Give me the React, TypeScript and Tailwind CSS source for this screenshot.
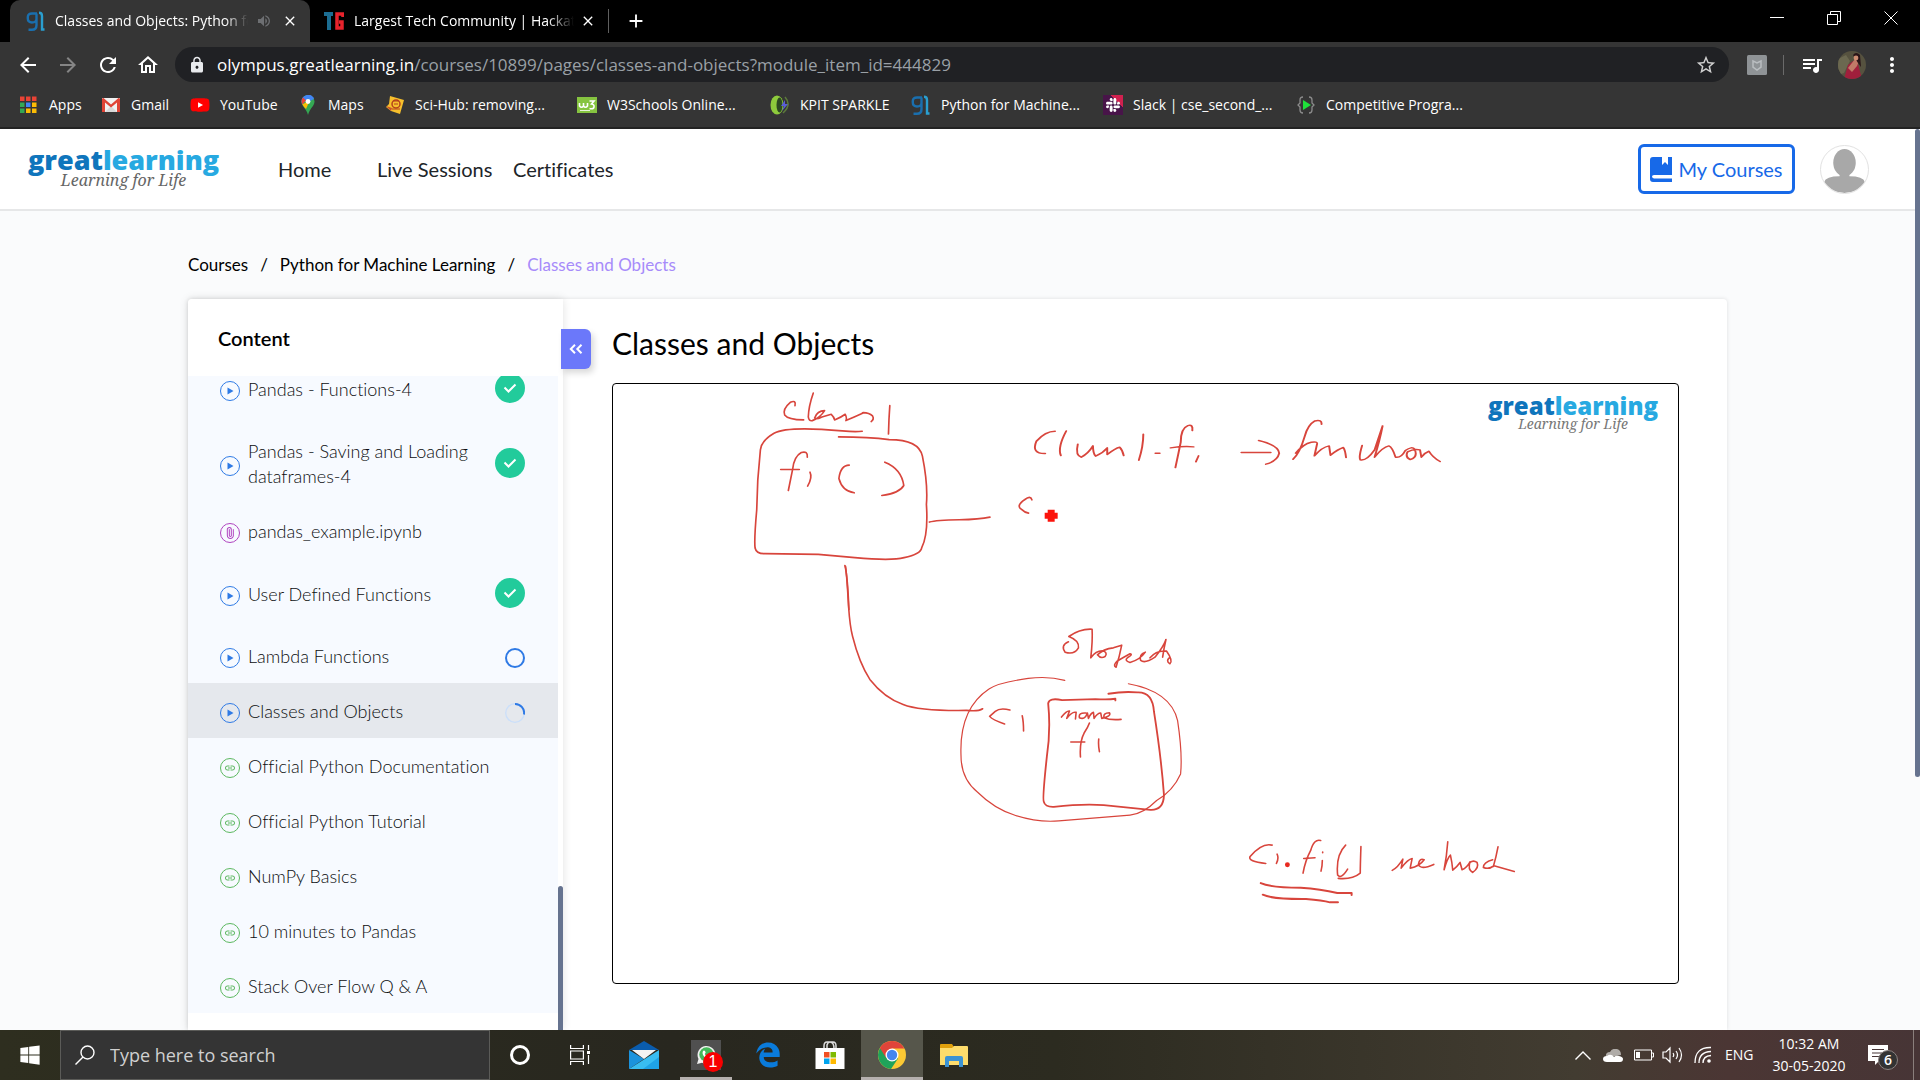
import React from "react";
import { MdArrowBack, MdArrowForward, MdRefresh, MdOutlineHome, MdLock, MdStarBorder, MdQueueMusic, MdMoreVert, MdVolumeUp, MdClose, MdAdd, MdLink } from "react-icons/md";
import { FaWindows, FaEdgeLegacy, FaSlack, FaYoutube } from "react-icons/fa6";
import { Paperclip } from "lucide-react";

function GlIcon() {
  return (
    <svg viewBox="0 0 20 20" className="h-5 w-5 shrink-0" fill="none" strokeWidth="2.4">
      <path d="M11 2.500H6Q1.800 2.500 1.800 6v1.500Q1.800 11.500 6 11.500Q10.500 11.500 10.500 8V2.500V14Q10.500 18.800 6 18.800H2.500" stroke="#1a6fae" />
      <path d="M13 1.800Q16 1.800 16 5V18.500H18.500" stroke="#2a9fd0" />
    </svg>
  );
}

function BookmarkIcon({ kind }: { kind: string }) {
  const box = "h-5 w-5 shrink-0";
  if (kind === "apps") {
    const c = ["#ea4335", "#ea4335", "#ea4335", "#34a853", "#4285f4", "#fbbc05", "#34a853", "#fbbc05", "#fbbc05"];
    return (
      <svg viewBox="0 0 20 20" className={box}>
        {c.map((f, i) => <rect key={i} x={1 + (i % 3) * 6} y={1.500 + Math.floor(i / 3) * 6} width="4.500" height="4.500" fill={f} />)}
      </svg>
    );
  }
  if (kind === "gmail") {
    return (
      <svg viewBox="0 0 20 20" className={box}>
        <path d="M1 3h18v14H1z" fill="#f2f2f2" />
        <path d="M4 17l6-6 6 6z" fill="#d8d8d8" />
        <path d="M1 17V4q0-1 1.500-1L10 9.500 17.500 3Q19 3 19 4v13h-3V7.500l-6 5-6-5V17z" fill="#e04436" />
      </svg>
    );
  }
  if (kind === "youtube") {
    return <FaYoutube className="h-5 w-5 shrink-0 bg-[linear-gradient(#fff,#fff)] bg-[length:8px_8px] bg-center bg-no-repeat text-[#ff0000]" />;
  }
  if (kind === "maps") {
    return (
      <svg viewBox="0 0 20 20" className={box}>
        <path d="M10 0a6.500 6.500 0 0 1 6.500 6.500C16.500 11 12 13 10 20 9 14.500 3.500 11 3.500 6.500A6.500 6.500 0 0 1 10 0z" fill="#34a853" />
        <path d="M4 9.500L13 1Q10-.8 7 .8 3.500 2.500 3.500 6.500z" fill="#4285f4" />
        <path d="M5 2.500l3 3L4.300 9.500Q2.500 5.500 5 2.500z" fill="#ea4335" />
        <path d="M4.300 9.500L12 5 8 14Q5.500 11.500 4.300 9.500z" fill="#fbbc05" />
        <path d="M8 .5Q14-1.500 16 4L12 6z" fill="#4285f4" />
        <circle cx="10" cy="6.500" r="2.400" fill="#fff" />
      </svg>
    );
  }
  if (kind === "scihub") {
    return (
      <svg viewBox="0 0 20 20" className={box}>
        <path d="M5 1l14 4-4 14-9-3-5-4 3-3z" fill="#f6bf2c" />
        <path d="M1 11l5 5 1-3z" fill="#c8502a" />
        <circle cx="11" cy="9" r="4" fill="none" stroke="#b3401c" strokeWidth="1.500" />
        <path d="M7 14h8M9 9h4M8 6l6 0" stroke="#b3401c" strokeWidth="1.200" />
      </svg>
    );
  }
  if (kind === "w3") {
    return (
      <svg viewBox="0 0 20 20" className={box} fill="none" stroke="#fff">
        <path d="M0 2h20v16H0z" fill="#86c440" stroke="none" />
        <path d="M2.500 8v3q2 2.500 4 0V8v3q2 2.500 4 0V8" strokeWidth="1.600" />
        <path d="M12.500 6h4.500l-2.500 3q3 .5 2.500 3t-4.500 1.500" strokeWidth="1.600" />
        <path d="M3 15.500h10" strokeWidth=".8" />
      </svg>
    );
  }
  if (kind === "kpit") {
    return (
      <svg viewBox="0 0 20 20" className={box}>
        <ellipse cx="7" cy="10" rx="6.500" ry="9.500" fill="#8ecb3c" />
        <ellipse cx="9.500" cy="10" rx="3" ry="7.500" fill="#2d4a22" />
        <path d="M15 2q7 8-2 16" fill="none" stroke="#5c7a3c" strokeWidth="1.500" />
        <path d="M15 5l-4 6h3l-2 5 6-7h-3z" fill="#5a5fd6" />
      </svg>
    );
  }
  if (kind === "gl") return <GlIcon />;
  if (kind === "slack") {
    return (
      <span className="grid h-5 w-5 shrink-0 place-items-center bg-[linear-gradient(225deg,#d0214f_32%,#481449_32%)]">
        <FaSlack className="h-4 w-4 text-white" />
      </span>
    );
  }
  return (
    <svg viewBox="0 0 20 20" className={box} fill="none" stroke="#8b8b8b" strokeWidth="1.300">
      <path d="M7 2Q4 2 4 5v3l-2 2 2 2v3q0 3 3 3M13 2q3 0 3 3v3l2 2-2 2v3q0 3-3 3" />
      <path d="M7 5l8 5-8 5z" fill="#1fe03a" stroke="none" />
    </svg>
  );
}

const bookmarks = [
  { kind: "apps", label: "Apps", w: "w-[82px]" },
  { kind: "gmail", label: "Gmail", w: "w-[89px]" },
  { kind: "youtube", label: "YouTube", w: "w-[108px]" },
  { kind: "maps", label: "Maps", w: "w-[87px]" },
  { kind: "scihub", label: "Sci-Hub: removing...", w: "w-[192px]" },
  { kind: "w3", label: "W3Schools Online...", w: "w-[193px]" },
  { kind: "kpit", label: "KPIT SPARKLE", w: "w-[141px]" },
  { kind: "gl", label: "Python for Machine...", w: "w-[192px]" },
  { kind: "slack", label: "Slack | cse_second_...", w: "w-[193px]" },
  { kind: "comp", label: "Competitive Progra...", w: "w-[190px]" },
];

function Browser() {
  return (
    <div className="shrink-0 bg-[#353535] font-['Open_Sans',sans-serif] text-white">
      <div className="flex h-[42px] items-stretch bg-black pl-[10px] text-sm">
        <div className="flex w-[300px] items-center rounded-t-[10px] bg-[#353535] pl-4 pr-3">
          <GlIcon />
          <span className="ml-[9px] w-[193px] overflow-hidden whitespace-nowrap [mask-image:linear-gradient(90deg,#000_88%,transparent)]">Classes and Objects: Python for Machine</span>
          <MdVolumeUp className="ml-2 h-4 w-4 shrink-0 text-[#6d6f72]" />
          <button aria-label="Close tab" className="ml-auto"><MdClose className="h-4 w-4" /></button>
        </div>
        <div className="flex w-[298px] items-center pl-[14px] pr-3">
          <svg viewBox="0 0 20 20" className="h-5 w-5 shrink-0" fill="none" strokeWidth="4">
            <path d="M0 3h9M5 3v16" stroke="#1c6d92" />
            <path d="M19 6V3h-6v14h5v-6h-3" stroke="#e8232c" strokeWidth="3.500" />
          </svg>
          <span className="ml-[10px] w-[220px] overflow-hidden whitespace-nowrap [mask-image:linear-gradient(90deg,#000_88%,transparent)]">Largest Tech Community | Hackathons</span>
          <button aria-label="Close tab" className="ml-auto"><MdClose className="h-4 w-4" /></button>
        </div>
        <div className="my-[9px] w-px bg-[#5f5f5f]" />
        <button aria-label="New tab" className="ml-[16px]"><MdAdd className="h-[22px] w-[22px]" /></button>
        <div className="ml-auto flex">
          <button aria-label="Minimize" className="grid h-9 w-[57px] place-items-center"><svg viewBox="0 0 14 14" className="h-[14px] w-[14px]" stroke="#fff"><path d="M0 6.500h14" /></svg></button>
          <button aria-label="Restore" className="grid h-9 w-[57px] place-items-center"><svg viewBox="0 0 14 14" className="h-[14px] w-[14px]" stroke="#fff" fill="none"><path d="M.5 3.500h10v10h-10zM3.500 3V.5h10v10h-3" /></svg></button>
          <button aria-label="Close" className="grid h-9 w-[58px] place-items-center"><svg viewBox="0 0 14 14" className="h-[14px] w-[14px]" stroke="#fff"><path d="M.5.5l13 13M13.500.5l-13 13" /></svg></button>
        </div>
      </div>
      <div className="flex h-[45px] items-center pl-4">
        <button aria-label="Back" className="w-10"><MdArrowBack className="h-6 w-6" /></button>
        <button aria-label="Forward" className="w-10"><MdArrowForward className="h-6 w-6 text-[#858585]" /></button>
        <button aria-label="Reload" className="w-10"><MdRefresh className="h-6 w-6" /></button>
        <button aria-label="Home" className="w-[39px]"><MdOutlineHome className="h-6 w-6" /></button>
        <div className="flex h-[35px] flex-1 items-center rounded-full bg-[#202124] pl-[13px] pr-3">
          <MdLock className="h-[18px] w-[18px] text-[#e8eaed]" />
          <div className="ml-[11px] flex-1 whitespace-nowrap text-[17px] text-[#9aa0a6]"><span className="text-white">olympus.greatlearning.in</span>/courses/10899/pages/classes-and-objects?module_item_id=444829</div>
          <button aria-label="Bookmark"><MdStarBorder className="h-[22px] w-[22px] text-[#d0d0d0]" /></button>
        </div>
        <button aria-label="Extension" className="ml-[18px]">
          <svg viewBox="0 0 20 20" className="h-5 w-5" fill="none"><rect width="20" height="20" rx="1.500" fill="#8f9396" /><path d="M6 6l4 2 4-2v6l-4 3-4-3z" stroke="#b9bdc0" strokeWidth="1.500" /></svg>
        </button>
        <div className="ml-4 h-5 w-px bg-[#6a6a6a]" />
        <button aria-label="Media" className="ml-4"><MdQueueMusic className="h-6 w-6" /></button>
        <button aria-label="Profile" className="ml-[14px] h-7 w-7 overflow-hidden rounded-full">
          <svg viewBox="0 0 28 28" className="h-7 w-7"><path d="M0 0h28v28H0z" fill="#56523f" /><path d="M0 8l8-4 4 6-6 12-6 2z" fill="#6b6850" /><path d="M6 28l4-14 5-4 5 3 4 15z" fill="#a01f3c" /><path d="M10 17l7-9 4 2-2 5-5 6z" fill="#c07a68" /><path d="M15 4q3-4 7 0l1 12-3-4z" fill="#2a1518" /><circle cx="18" cy="7" r="2.400" fill="#cf8d72" /></svg>
        </button>
        <button aria-label="Menu" className="ml-[14px] mr-4"><MdMoreVert className="h-6 w-6" /></button>
      </div>
      <div className="flex h-[42px] items-center border-b-2 border-[#232323] pl-[19px] text-sm">
        {bookmarks.map((b) => (
          <a key={b.kind} href="#" className={`flex shrink-0 items-center gap-[10px] whitespace-nowrap pb-1 ${b.w}`}>
            <BookmarkIcon kind={b.kind} />
            {b.label}
          </a>
        ))}
      </div>
    </div>
  );
}

function Logo({ small = false }: { small?: boolean }) {
  return (
    <div className="flex flex-col items-center">
      <div className={small ? "font-['Open_Sans',sans-serif] text-2xl font-extrabold leading-6 text-[#27a9e1]" : "font-['Open_Sans',sans-serif] text-[27px] font-extrabold leading-[26px] text-[#27a9e1]"}>
        <span className="text-[#0f75bc]">great</span>learning
      </div>
      <div className={small ? "font-['Noto_Serif','Liberation_Serif',serif] text-sm italic leading-3 text-[#777]" : "font-['Noto_Serif','Liberation_Serif',serif] text-base italic leading-[14px] text-[#666]"}>Learning for Life</div>
    </div>
  );
}

type Row = { icon: "play" | "clip" | "link"; label: string; status?: "done" | "empty" | "part"; active?: boolean };
const rows: Row[] = [
  { icon: "play", label: "Pandas - Functions-4", status: "done" },
  { icon: "play", label: "Pandas - Saving and Loading dataframes-4", status: "done" },
  { icon: "clip", label: "pandas_example.ipynb" },
  { icon: "play", label: "User Defined Functions", status: "done" },
  { icon: "play", label: "Lambda Functions", status: "empty" },
  { icon: "play", label: "Classes and Objects", status: "part", active: true },
  { icon: "link", label: "Official Python Documentation" },
  { icon: "link", label: "Official Python Tutorial" },
  { icon: "link", label: "NumPy Basics" },
  { icon: "link", label: "10 minutes to Pandas" },
  { icon: "link", label: "Stack Over Flow Q & A" },
];

function RowIcon({ icon }: { icon: Row["icon"] }) {
  const base = "mt-[5px] grid h-5 w-5 shrink-0 place-items-center rounded-full border";
  if (icon === "play") return <span className={`${base} border-[#2f7ae5]`}><svg viewBox="0 0 8 8" className="h-2 w-2"><path d="M1.500.5l6 3.500-6 3.500z" fill="#2f7ae5" /></svg></span>;
  if (icon === "clip") return <span className={`${base} border-[#b044c0] text-[#b044c0]`}><Paperclip className="h-3 w-3 -rotate-45" strokeWidth={2} /></span>;
  return <span className={`${base} border-[#5cb860] text-[#5cb860]`}><MdLink className="h-3 w-3" /></span>;
}

function Status({ status }: { status: Row["status"] }) {
  if (status === "done") {
    return (
      <span className="grid h-[30px] w-[30px] shrink-0 place-items-center rounded-full bg-[#22cb9b]">
        <svg viewBox="0 0 14 12" className="h-3 w-[14px]" fill="none" stroke="#fff" strokeWidth="2"><path d="M1.500 5.500l4 4 7-7" /></svg>
      </span>
    );
  }
  if (status === "empty") return <span className="mt-[5px] h-5 w-5 shrink-0 rounded-full border-2 border-[#2f7ae5]" />;
  if (status === "part") {
    return (
      <svg viewBox="0 0 20 20" className="mt-[5px] h-5 w-5 shrink-0" fill="none">
        <circle cx="10" cy="10" r="9.300" stroke="#cbdffa" strokeWidth="1.300" />
        <path d="M10 1a9 9 0 0 1 9 10.500" stroke="#2f7ae5" strokeWidth="2" />
      </svg>
    );
  }
  return null;
}

function Sidebar() {
  return (
    <aside className="relative z-10 flex w-[375px] shrink-0 flex-col rounded-tl bg-white shadow-[0_0_10px_rgba(0,0,0,0.12)]">
      <h2 className="flex h-[77px] shrink-0 items-center px-[30px] text-xl font-semibold">Content</h2>
      <div className="flex min-h-0 flex-1 items-start overflow-hidden">
        <ul className="-mt-[23px] w-[370px] bg-[#f7faff] [clip-path:inset(23px_0_0_0)]">
          {rows.map((r) => (
            <li key={r.label} className={r.active ? "bg-[#e5e8ed]" : ""}>
              <a href="#" className={`flex items-center gap-2 py-[14px] pl-8 pr-[33px] text-lg font-light leading-[25px] text-[#0c0e10] ${r.status === "done" ? "min-h-[70px]" : "min-h-[55px]"}`}>
                <RowIcon icon={r.icon} />
                <span className="w-[238px] flex-1 pt-[2px]">{r.label}</span>
                <Status status={r.status} />
              </a>
            </li>
          ))}
        </ul>
        <div className="h-full w-[5px] pt-[510px]"><div className="h-full rounded-t bg-[#66738f]" /></div>
      </div>
      <button aria-label="Collapse" className="absolute -right-7 top-[30px] grid h-10 w-[30px] place-items-center rounded-r-md bg-[#6b78fa] shadow-[3px_4px_6px_rgba(0,0,0,0.15)]">
        <svg viewBox="0 0 14 10" className="h-[10px] w-[14px]" fill="none" stroke="#fff" strokeWidth="2"><path d="M6 .8L1.800 5 6 9.200M12.500.8L8.300 5l4.200 4.200" /></svg>
      </button>
    </aside>
  );
}

/* Pen strokes of the lecture whiteboard. */
function Whiteboard() {
  return (
    <svg viewBox="612 383 1067 600" className="block w-full" fill="none" stroke="#d8453c" strokeWidth="1.700" strokeLinecap="round" strokeLinejoin="round" role="img" aria-label="Lecture whiteboard sketch">
      <g transform="translate(720 369) scale(.33333)" strokeWidth="5">
        <path d="M223 107q4-18-14-10-24 20-17 38 10 14 57 15M278 69q-14 40-15 72 2 14 12 11Q298 144 312 122q-22 0-30 22 4 6 22-3L332 133Q340 140 342 150Q362 142 374 133Q380 146 376 152Q400 142 426 130Q424 128 428 128Q446 128 456 138Q462 148 452 155M508 107q-3 40-4 85" />
        <path d="M425 184q-20 3-60-1Q200 168 160 190q-38 22-41 50-10 90-11 180-8 90-5 115 4 18 30 17l160 2 110 10q110 10 148 0 50-10 53-30 20-40 14-130 5-60-12-145-10-50-100-50-60-8-152-8" />
        <path d="M260 262q2-20-18-14-22 12-26 50l-13 64M180 299h56M268 307q8 16-7 42M386 286q-26 0-31 40 10 38 46 43M493 277q50 20 57 70-14 24-66 30" />
        <path d="M627 457q20-6 90-7 60-1 92-8M373 588q8 30 12 132M935 390q-4-14-22 0-26 18-10 28 10 10 22 12" />
      </g>
      <g transform="translate(1000 369) scale(.44643 .33333)" strokeWidth="4.400">
        <path d="M123 184q-22 0-42 30-12 38 20 37M148 183q-20 50-12 74M174 223Q168 258 182 262Q198 250 208 228Q208 250 214 259Q230 250 240 234L240 254Q258 235 268 232Q274 240 277 257M321 193q0 36-10 78M348 250h10M431 182q2-20-10-15-16 8-16 50-6 40-12 76M382 234q30-6 52-3M445 258l-6 18" />
        <path d="M541 248h66M580 212q44 14 46 38-4 24-30 33M721 163Q722 148 706 153Q690 165 683 200Q672 250 657 268M663 250Q680 222 698 217Q712 214 711 222L705 258Q722 232 738 228L741 256Q758 238 770 233Q774 240 776 263M812 227Q804 262 808 270Q822 274 840 240L858 168Q852 210 840 262Q858 232 872 228Q880 232 887 262Q900 265 909 242Q924 228 930 238Q938 262 920 269Q908 262 914 246Q928 236 942 240L945 262Q953 248 962 244Q970 262 987 275" />
      </g>
      <g transform="translate(820 560) scale(.33333)" strokeWidth="4.800">
        <path d="M75 17q4 30 9 120 4 60 12 90 20 80 52 130 44 56 100 75 50 20 190 18 36 4 49-5" />
        <path d="M734 360q-50-14-110-6-90 12-118 32-90 60-84 200 0 70 50 110 50 50 114 70 70 22 130 16l214-17q40-4 80-44 50-30 72-80 6-60-9-160-20-88-148-111" strokeWidth="3.600" />
        <path d="M886 420v-5q-20 3-60 1l-100 3q-40-8-42 10 8 80-4 160-14 130-9 136 4 16 30 15 90-10 150-5l140 14q40 2 41-45-8-110-30-250-4-60-50-58-40-4-87 4" strokeWidth="5.500" />
        <path d="M812 292Q818 240 816 206Q780 204 746 228Q778 240 775 262Q762 284 735 275Q720 255 745 244M812 292Q828 270 848 271Q864 276 855 288Q842 296 832 283Q850 265 880 262L905 254Q898 290 888 320Q878 316 890 303Q915 288 930 280Q940 282 922 292Q912 300 930 306Q960 298 976 275Q956 282 962 300Q975 310 1005 290Q1030 260 1038 237Q1032 262 1028 290M990 292Q1010 268 1040 272Q1060 300 1050 310Q1036 302 1050 290" />
        <path d="M569 449q-30-8-44 4l-17 15q8 10 45 23M606 466q4 18 4 46M724 470Q740 450 748 452L740 474Q756 452 768 456L766 476M798 458Q774 456 778 472Q794 480 802 458L805 474Q812 458 820 456L822 474Q832 458 842 458L845 474Q875 468 868 457Q848 458 852 472Q870 480 903 477M808 488q-4 12-16 30-14 26-11 72M752 545h42M836 536q-2 18 2 38" />
      </g>
      <g transform="translate(1220 799) scale(.33333)" strokeWidth="4.800">
        <path d="M157 138q-30-8-66 34-8 16 47 21M172 165q6 12-2 28M303 124q-20-6-30 30-16 30-23 68M252 178l34-2M309 159v2M308 184q0 16-4 32M378 138q-30 30-24 90 10 14 30-18M424 142q-2 60-2 80-24 20-66 16" />
        <circle cx="203" cy="197" r="5" fill="#e82a20" stroke="#e82a20" />
        <path d="M123 252q30 14 120 14 60 4 110 16h43v6M129 287q30 14 130 13 50 4 72 10h24" strokeWidth="6" />
        <path d="M518 214Q535 205 550 180L545 207Q565 180 578 178L572 207Q600 202 614 182Q600 176 597 195Q602 214 643 196M685 128Q682 170 674 212Q684 176 693 168Q698 190 700 213Q712 204 722 190L728 212Q742 206 752 188Q744 212 760 220Q780 206 773 190Q762 182 752 190M836 143Q830 175 822 202M820 182Q792 190 792 205Q808 212 824 200L885 217" />
      </g>
      <path d="M1047.500 509h7v3h3v6h-3v3h-7v-3h-3v-6h3z" fill="#fb140c" stroke="none" />
    </svg>
  );
}

function Site() {
  return (
    <div className="relative flex min-h-0 flex-1 flex-col overflow-hidden bg-[#fafbfc] font-['Lato',sans-serif] text-black [font-variant-ligatures:none]">
      <header className="flex h-[82px] shrink-0 items-center border-b-2 border-[#e6e7e8] bg-white pl-[29px] pr-[51px]">
        <a href="#" className="flex w-[189px] justify-center pb-1"><Logo /></a>
        <nav className="ml-[60px] flex items-center text-xl text-[#212529]">
          <a href="#" className="w-[99px]">Home</a>
          <a href="#" className="w-[136px]">Live Sessions</a>
          <a href="#">Certificates</a>
        </nav>
        <button className="ml-auto flex h-[50px] w-[157px] items-center justify-center gap-[6px] rounded-md border-[3px] border-[#1769e8] text-xl text-[#1769e8]">
          <svg viewBox="0 0 22 25" className="h-[25px] w-[22px]" fill="#1769e8"><path d="M3 0h9v8l3-3 3 3V0h4v18H4q-2 0-2 1.500T4 21.500h18V25H3q-3 0-3-3V3q0-3 3-3z" /></svg>
          <span className="whitespace-nowrap">My Courses</span>
        </button>
        <button aria-label="Account" className="ml-[25px] h-[49px] w-[49px] overflow-hidden rounded-full border border-[#e2e2e2]">
          <svg viewBox="0 0 48 48" className="h-full w-full" fill="#a8a8a8"><ellipse cx="24" cy="17" rx="11.500" ry="14" /><path d="M19 27h10v4q14 0 16 6-7 11-21 11T3 37q2-6 16-6z" /></svg>
        </button>
      </header>
      <main className="flex min-h-0 flex-1 flex-col pl-[188px] pr-[193px]">
        <nav aria-label="Breadcrumb" className="flex h-[88px] shrink-0 items-center gap-3 pt-5 text-[17px]">
          <a href="#">Courses</a><span>/</span><a href="#">Python for Machine Learning</a><span>/</span><span className="text-[#a78bfa]">Classes and Objects</span>
        </nav>
        <div className="flex min-h-0 flex-1 rounded-t bg-white shadow-[0_0_4px_rgba(0,0,0,0.12)]">
          <Sidebar />
          <section className="min-w-0 flex-1 pl-[49px] pr-12">
            <h1 className="flex h-[84px] items-center pt-1 text-3xl">Classes and Objects</h1>
            <div className="relative rounded border border-black">
              <Whiteboard />
              <div className="absolute right-5 top-[10px]"><Logo small /></div>
            </div>
          </section>
        </div>
      </main>
      <div className="absolute right-0 top-0 h-[648px] w-[5px] rounded-sm bg-[#66738f]" />
    </div>
  );
}

function AppIcon({ name }: { name: string }) {
  if (name === "Mail") return (
    <svg viewBox="0 0 30 28" className="h-7 w-[30px]"><path d="M0 9L15 0l15 9z" fill="#0a5cad" /><path d="M0 9l15 9L0 28z" fill="#1b93dd" /><path d="M30 9v19H0z" fill="#39bdf1" /><path d="M30 28H14l16-12z" fill="#1fa3e6" /><path d="M3 9h24l-12 9z" fill="#f3f3f3" /></svg>
  );
  if (name === "WhatsApp") return (
    <span className="relative grid h-[30px] w-[30px] place-items-center bg-[#505050]">
      <svg viewBox="0 0 20 20" className="h-5 w-5"><path d="M1 19l1.500-5A9 9 0 1 1 6 17.700z" fill="#f1f1f1" /><circle cx="10.500" cy="9.500" r="7.200" fill="#45b85a" /><path d="M7 6q1-1 2 0l.7 1.700-1 1.200q1 2 3 2.800l1.200-1.200L15 11.500q0 2-2.500 2-5.500-1-6-5.500z" fill="#fff" /></svg>
      <span className="absolute -right-[2px] top-3 grid h-5 w-5 place-items-center rounded-full bg-[#f80000] font-['Liberation_Sans',sans-serif] text-base leading-none text-white">1</span>
    </span>
  );
  if (name === "Edge") return <FaEdgeLegacy className="h-[26px] w-[26px] text-[#0a7bdb]" />;
  if (name === "Store") return (
    <svg viewBox="0 0 30 30" className="h-[30px] w-[30px]"><path d="M9 9V6q0-4 3-4h6q3 0 3 4v3M12 9V5q1-3 3-3 4 0 4 7" fill="none" stroke="#ddd" strokeWidth="1.500" /><path d="M.5 8h29v21h-29z" fill="#fff" /><path d="M9 12h5.500v5.500H9z" fill="#f25022" /><path d="M15.500 12H21v5.500h-5.500z" fill="#7fba00" /><path d="M9 18.500h5.500V24H9z" fill="#00a4ef" /><path d="M15.500 18.500H21V24h-5.500z" fill="#ffb900" /></svg>
  );
  if (name === "Chrome") return (
    <svg viewBox="0 0 28 28" className="h-7 w-7"><circle cx="14" cy="14" r="14" fill="#fbc934" /><path d="M14 14L1.900 7A14 14 0 0 0 13 28l7-10.500z" fill="#1fa35a" /><path d="M14 7.500h12.400A14 14 0 0 0 1.900 7L8.400 17.200z" fill="#e0443a" /><circle cx="14" cy="14" r="6.500" fill="#fff" /><circle cx="14" cy="14" r="5.200" fill="#4686f0" /></svg>
  );
  return (
    <svg viewBox="0 0 28 24" className="h-6 w-7"><path d="M0 2q0-1 1-1h11l2 3-2 2H0z" fill="#e0a00c" /><path d="M0 5h12l2-2h13q1 0 1 1v18H0z" fill="#fddc6c" /><path d="M5 24V15q0-2 2-2h14q2 0 2 2v9h-4v-6H9v6z" fill="#3c93d4" /></svg>
  );
}

function Taskbar() {
  return (
    <footer className="flex h-[50px] shrink-0 items-stretch bg-[linear-gradient(90deg,#2e2e1f_0%,#28271f_35%,#2c2b20_55%,#423c31_82%,#4b3634_90%,#473536_100%)] font-['Open_Sans',sans-serif] text-white">
      <button aria-label="Start" className="grid w-[60px] place-items-center"><FaWindows className="h-[22px] w-[22px]" /></button>
      <label className="flex w-[430px] items-center border border-[#5b5b58] bg-[#343434] pl-[14px]">
        <svg viewBox="0 0 20 20" className="h-5 w-5" fill="none" stroke="#fff" strokeWidth="1.400"><circle cx="12.500" cy="7.500" r="6.500" /><path d="M8 12L.5 19.500" /></svg>
        <input aria-label="Search" placeholder="Type here to search" className="ml-[15px] flex-1 bg-transparent text-lg placeholder-[#d0d0d0] outline-none" />
      </label>
      <button aria-label="Cortana" className="grid w-[60px] place-items-center"><span className="h-5 w-5 rounded-full border-[3px] border-white" /></button>
      <button aria-label="Task view" className="mr-[3px] grid w-[60px] place-items-center">
        <svg viewBox="0 0 20 20" className="h-5 w-5" fill="none" stroke="#fff" strokeWidth="1.200"><path d="M.6 0v3.500h12.800V0M.6 6h12.800v8H.6zM.6 20v-3.500h12.800V20M18.500 0v5M18.500 10v9" /><path d="M17 6h3v3h-3z" fill="#fff" stroke="none" /></svg>
      </button>
      {["Mail", "WhatsApp", "Edge", "Store", "Chrome", "File Explorer"].map((n) => (
        <button key={n} aria-label={n} className={`relative grid w-[62px] place-items-center ${n === "Chrome" ? "bg-[#56564b]" : ""}`}>
          <AppIcon name={n} />
          {n === "Chrome" && <span className="absolute inset-x-0 bottom-0 h-[3px] bg-[#b5b0ae]" />}
          {n === "WhatsApp" && <span className="absolute inset-x-[5px] bottom-0 h-[3px] bg-[#b5b0ae]" />}
        </button>
      ))}
      <div className="ml-auto flex items-center">
        <svg viewBox="0 0 16 9" className="h-[9px] w-4" fill="none" stroke="#fff" strokeWidth="1.400"><path d="M.5 8.500L8 1l7.500 7.500" /></svg>
        <svg viewBox="0 0 20 13" className="ml-3 h-[13px] w-5"><path d="M3 9q-1-6 4-6 2-4 7-3 4 1 4 6z" fill="#b0aca8" /><path d="M4 13q-4 0-4-3t4-3q4-3 7 1 2-2 5-1 4 1 4 3 0 3-3 3z" fill="#fff" /></svg>
        <svg viewBox="0 0 20 12" className="ml-[11px] h-3 w-5" fill="none" stroke="#fff"><path d="M.5 1h17v10H.5zM18 4h1.500v4H18" /><path d="M2 3h4v6H2z" fill="#fff" stroke="none" /></svg>
        <svg viewBox="0 0 22 18" className="ml-2 h-[18px] w-[22px]" fill="none" stroke="#fff" strokeWidth="1.200"><path d="M1 6h3l4-4v14l-4-4H1zM11 7q1.500 2 0 4M14 5q3 4 0 8M17 2q5 7 0 14" /></svg>
        <svg viewBox="0 0 18 18" className="ml-[10px] h-[18px] w-[18px]" fill="none" stroke="#fff" strokeWidth="1.300"><path d="M1 17Q1 1 17 1.500M5 17Q5 6 17 5.500M9 17q0-7 8-7.500" /><circle cx="15" cy="15" r="1.800" fill="#fff" stroke="none" /></svg>
        <span className="ml-[13px] w-[31px] text-sm">ENG</span>
        <div className="ml-3 w-[82px] whitespace-nowrap text-center text-sm leading-[22px]">10:32 AM<br />30-05-2020</div>
        <button aria-label="Notifications" className="relative ml-[18px] h-[30px] w-[30px]">
          <svg viewBox="0 0 20 20" className="h-5 w-5"><path d="M0 0h20v16h-9l-4 4v-4H0z" fill="#fff" /><path d="M4 4.500h12M4 8h12M4 11.500h8" stroke="#473536" strokeWidth="1.200" /></svg>
          <span className="absolute bottom-0 right-0 grid h-5 w-5 place-items-center rounded-full border border-[#8a8280] bg-[#333] text-sm font-semibold leading-none">6</span>
        </button>
        <div className="ml-[15px] mr-[6px] h-[50px] w-px bg-[#8a7f7c]" />
      </div>
    </footer>
  );
}

export default function App() {
  return (
    <div className="flex h-screen flex-col overflow-hidden">
      <Browser />
      <Site />
      <Taskbar />
    </div>
  );
}
